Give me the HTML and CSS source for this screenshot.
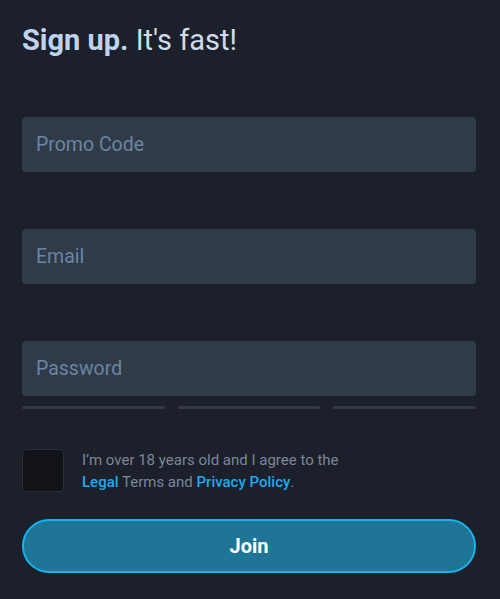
FILE: index.html
```html
<!DOCTYPE html>
<html lang="en">
<head>
<meta charset="utf-8">
<title>Sign up</title>
<link rel="stylesheet" href="styles.css">
</head>
<body>
<main class="signup">
  <h1 class="title"><strong>Sign up.</strong> It's fast!</h1>
  <form class="form">
    <div class="field"><input class="input" type="text" placeholder="Promo Code"></div>
    <div class="field"><input class="input" type="email" placeholder="Email"></div>
    <div class="field"><input class="input" type="password" placeholder="Password"></div>
    <div class="strength">
      <span class="bar"></span><span class="bar"></span><span class="bar"></span>
    </div>
    <label class="agree">
      <span class="check"></span>
      <span class="agree-text">I’m over 18 years old and I agree to the<br><a class="link" href="#">Legal</a> Terms and <a class="link" href="#">Privacy Policy</a>.</span>
    </label>
    <button class="join" type="button">Join</button>
  </form>
</main>
</body>
</html>
```
FILE: styles.css
```css
* { box-sizing: border-box; }
html, body { margin: 0; padding: 0; }
body {
  background: #1b202a;
  font-family: Roboto, "Noto Sans", Arial, sans-serif;
  width: 500px;
  height: 599px;
  overflow: hidden;
}
.signup {
  padding: 22px 24px 0 22px;
}
.title {
  margin: 0;
  font-size: 29px;
  line-height: 36px;
  font-weight: 400;
  color: #cfdcec;
}
.title strong {
  font-weight: 700;
  color: #bfd3ee;
}
.form {
  display: flex;
  flex-direction: column;
  margin-top: 59px;
}
.field + .field { margin-top: 57px; }
.input {
  display: block;
  width: 100%;
  height: 55px;
  border: none;
  border-radius: 4px;
  background: #313a47;
  padding: 0 14px;
  font-family: inherit;
  font-size: 19.5px;
  color: #c9d6e6;
  outline: none;
}
.input::placeholder { color: #6886a5; }
.strength {
  display: grid;
  grid-template-columns: repeat(3, 1fr);
  gap: 13px;
  margin-top: 10px;
}
.bar {
  height: 3px;
  border-radius: 2px;
  background: #323a46;
}
.agree {
  display: flex;
  align-items: flex-start;
  gap: 18px;
  margin-top: 40px;
}
.check {
  flex: none;
  width: 42px;
  height: 43px;
  border-radius: 4px;
  background: #111318;
  border: 1px solid #2a2f38;
}
.agree-text {
  font-size: 15px;
  line-height: 22px;
  color: #7a8799;
}
.link {
  color: #1fa9ec;
  font-weight: 500;
  text-decoration: none;
}
.join {
  margin-top: 26px;
  height: 54px;
  width: 100%;
  border-radius: 27px;
  border: 2px solid #17b4ee;
  background: #1e7596;
  color: #ffffff;
  font-family: inherit;
  font-size: 20px;
  font-weight: 700;
  cursor: pointer;
}
```
